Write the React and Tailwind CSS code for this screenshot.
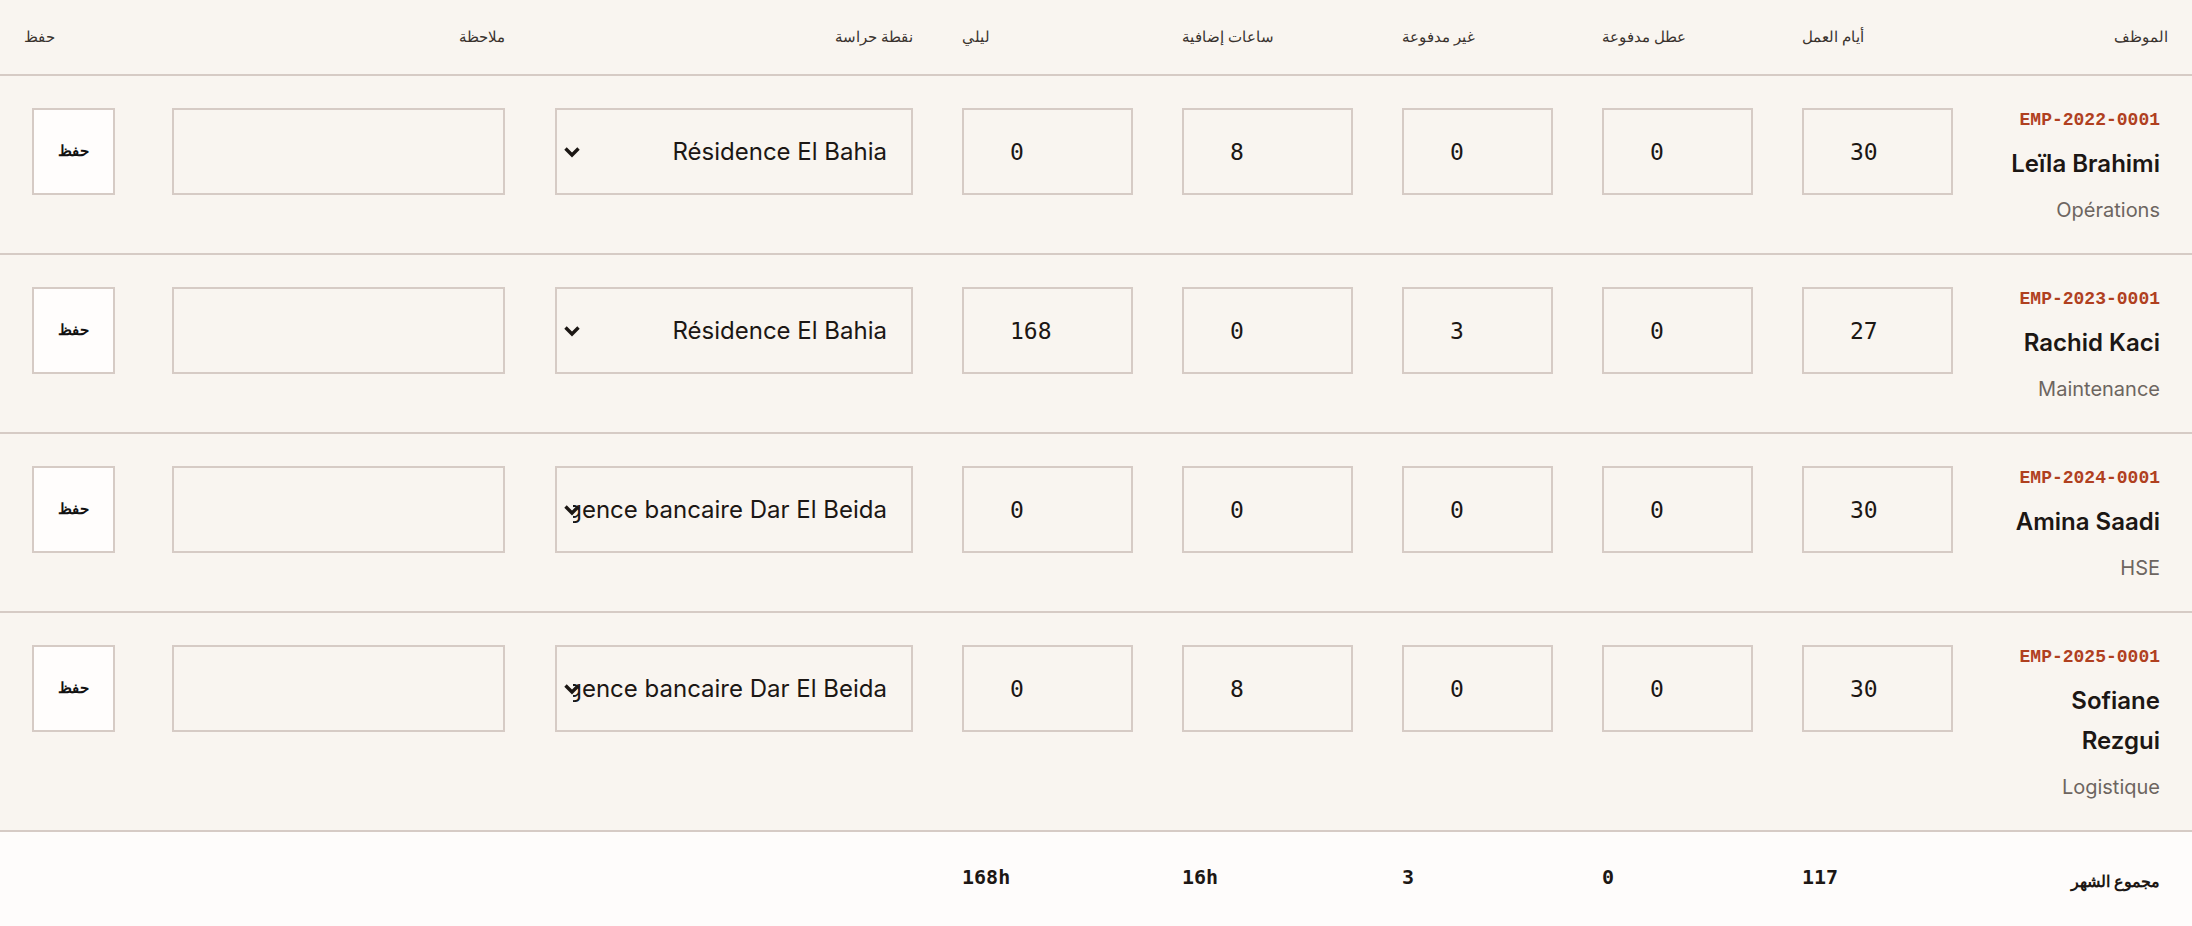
import React from 'react';

const employees = [
  { id: 'EMP-2022-0001', name: 'Leïla Brahimi', dept: 'Opérations', days: 30, paid: 0, unpaid: 0, overtime: 8, night: 0, post: 'Résidence El Bahia' },
  { id: 'EMP-2023-0001', name: 'Rachid Kaci', dept: 'Maintenance', days: 27, paid: 0, unpaid: 3, overtime: 0, night: 168, post: 'Résidence El Bahia' },
  { id: 'EMP-2024-0001', name: 'Amina Saadi', dept: 'HSE', days: 30, paid: 0, unpaid: 0, overtime: 0, night: 0, post: 'Agence bancaire Dar El Beida' },
  { id: 'EMP-2025-0001', name: 'Sofiane Rezgui', dept: 'Logistique', days: 30, paid: 0, unpaid: 0, overtime: 8, night: 0, post: 'Agence bancaire Dar El Beida' },
];

// column boxes, right to left (page is rtl)
const col = {
  employee: 'w-[187px] shrink-0',
  days: 'mr-[52px] w-[151px] shrink-0',
  paid: 'mr-[49px] w-[151px] shrink-0',
  unpaid: 'mr-[49px] w-[151px] shrink-0',
  overtime: 'mr-[49px] w-[171px] shrink-0',
  night: 'mr-[49px] w-[171px] shrink-0',
  post: 'mr-[49px] w-[358px] shrink-0',
  note: 'mr-[50px] w-[333px] shrink-0',
  save: 'mr-[57px] w-[83px] shrink-0',
};

const Chevron = () => (
  <svg width="18" height="12" viewBox="0 0 18 12" className="absolute left-[6px] top-1/2 -translate-y-1/2 text-[#1c1714]">
    <path d="M2.5 2.5 L9 9 L15.5 2.5" fill="none" stroke="currentColor" strokeWidth="3.4" />
  </svg>
);

const NumberBox = ({ value, className }) => (
  <input
    type="text"
    dir="ltr"
    inputMode="numeric"
    defaultValue={value}
    className={`${className} h-[87px] border-2 border-[#d6cbc5] bg-transparent pl-[46px] text-left font-['DejaVu_Sans_Mono',monospace] text-[23px] text-[#1c1714] outline-none`}
  />
);

// long post names run past the left edge and get clipped, arrow sits on top
const PostSelect = ({ value }) => (
  <div className={`${col.post} relative h-[87px] border-2 border-[#d6cbc5] pl-4 pr-[24px]`}>
    <div className="flex h-full items-center overflow-hidden whitespace-nowrap">
      <span dir="rtl" className="w-full shrink-0 text-right text-[24px] text-[#1c1714]">{value}</span>
    </div>
    <Chevron />
  </div>
);

const Row = ({ emp }) => (
  <div className="flex items-start border-b-2 border-[#d6cbc5]">
    <div className={`${col.employee} pt-8 pb-[29px] pr-8 text-right`}>
      <div dir="ltr" className="text-right font-['Liberation_Mono',monospace] text-[18px] font-bold leading-6 text-[#b0401f]">{emp.id}</div>
      <div dir="ltr" className="mt-3 text-right text-[24px] font-semibold leading-10 text-[#1c1714]">{emp.name}</div>
      <div dir="ltr" className="mt-3 text-right text-[20px] leading-7 text-[#6d6560]">{emp.dept}</div>
    </div>
    <div className="flex items-start pt-8">
      <NumberBox value={emp.days} className={col.days} />
      <NumberBox value={emp.paid} className={col.paid} />
      <NumberBox value={emp.unpaid} className={col.unpaid} />
      <NumberBox value={emp.overtime} className={col.overtime} />
      <NumberBox value={emp.night} className={col.night} />
      <PostSelect value={emp.post} />
      <input type="text" className={`${col.note} h-[87px] border-2 border-[#d6cbc5] bg-transparent outline-none`} />
      <button className={`${col.save} h-[87px] border-2 border-[#d6cbc5] bg-[#fffdfc] text-[15px] font-bold text-[#111]`}>حفظ</button>
    </div>
  </div>
);

const Header = () => (
  <div className="flex h-[76px] items-center border-b-2 border-[#d6cbc5] text-[15px] text-[#3a332e]">
    <div className={`${col.employee} pr-6 text-right`}>الموظف</div>
    <div className={`${col.days} text-left`}>أيام العمل</div>
    <div className={`${col.paid} text-left`}>عطل مدفوعة</div>
    <div className={`${col.unpaid} text-left`}>غير مدفوعة</div>
    <div className={`${col.overtime} text-left`}>ساعات إضافية</div>
    <div className={`${col.night} text-left`}>ليلي</div>
    <div className={`${col.post} text-right`}>نقطة حراسة</div>
    <div className={`${col.note} text-right`}>ملاحظة</div>
    <div className="mr-[57px] w-[91px] shrink-0 text-left">حفظ</div>
  </div>
);

const Footer = () => {
  const sum = (k) => employees.reduce((a, e) => a + e[k], 0);
  const mono = "font-['DejaVu_Sans_Mono',monospace] text-[20px] font-bold text-[#1c1714] text-left";
  return (
    <div className="flex items-center bg-[#fefcfb] pt-[27px] pb-12 leading-7">
      <div className={`${col.employee} pr-8 pt-2 text-right text-[16px] font-bold text-[#1c1714]`}>مجموع الشهر</div>
      <div dir="ltr" className={`${col.days} ${mono}`}>{sum('days')}</div>
      <div dir="ltr" className={`${col.paid} ${mono}`}>{sum('paid')}</div>
      <div dir="ltr" className={`${col.unpaid} ${mono}`}>{sum('unpaid')}</div>
      <div dir="ltr" className={`${col.overtime} ${mono}`}>{sum('overtime')}h</div>
      <div dir="ltr" className={`${col.night} ${mono}`}>{sum('night')}h</div>
    </div>
  );
};

export default function App() {
  return (
    <div dir="rtl" className="min-h-screen bg-[#f9f5f0] font-['Inter',sans-serif]">
      <Header />
      {employees.map((emp) => (
        <Row key={emp.id} emp={emp} />
      ))}
      <Footer />
    </div>
  );
}
